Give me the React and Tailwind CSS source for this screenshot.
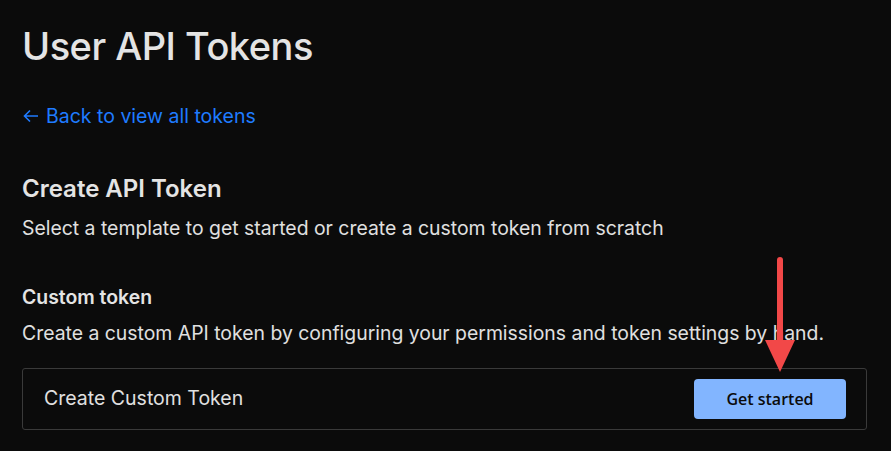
import React from "react";

export default function App() {
  return (
    <div
      className="relative w-[891px] h-[451px] overflow-hidden bg-[#0b0b0b] text-[#e6e6e6]"
      style={{ fontFamily: "Inter, 'Noto Sans', sans-serif" }}
    >
      <div className="pl-[22px] pr-6 pt-[22px]">
        <h1 className="text-[38px] leading-[48px] font-medium tracking-[-0.5px] text-[#e4e4e4]">
          User API Tokens
        </h1>

        <a href="#" className="mt-[32px] flex items-center gap-[6px] text-[19.5px] leading-[28px] text-[#1f7bff]">
          <svg width="18" height="18" viewBox="0 0 18 18" fill="none" stroke="currentColor" strokeWidth="1.6">
            <path d="M16 9H2.5M8 3.5L2.5 9L8 14.5" />
          </svg>
          Back to view all tokens
        </a>

        <h2 className="mt-[43px] text-[24px] leading-[32px] font-semibold text-[#e4e4e4]">
          Create API Token
        </h2>
        <p className="mt-[9px] text-[19.4px] leading-[28px] text-[#e0e0e0]">
          Select a template to get started or create a custom token from scratch
        </p>

        <h3 className="mt-[41px] text-[19.4px] leading-[28px] font-semibold text-[#e4e4e4]">
          Custom token
        </h3>
        <p className="mt-[8px] text-[19.4px] leading-[28px] text-[#e0e0e0]">
          Create a custom API token by configuring your permissions and token settings by hand.
        </p>

        <div className="mt-[21px] w-[845px] h-[62px] flex items-center justify-between pl-[21px] pr-[20px] border border-[#3a3a3a] rounded-[3px]">
          <span className="text-[19.5px] text-[#e0e0e0]">Create Custom Token</span>
          <button
            className="w-[152px] h-[40px] rounded-[4px] bg-[#82b5ff] text-[#0b0b0b] text-[16px] font-semibold"
            style={{ fontFamily: "'Open Sans', 'Noto Sans', sans-serif" }}
          >
            Get started
          </button>
        </div>
      </div>

      {/* annotation arrow */}
      <svg className="absolute left-[760px] top-[252px]" width="40" height="125" viewBox="0 0 40 125">
        <line x1="20" y1="8" x2="20" y2="92" stroke="#f24848" strokeWidth="6" strokeLinecap="round" />
        <polygon points="5,88 35,88 20,120" fill="#f24848" />
      </svg>
    </div>
  );
}
